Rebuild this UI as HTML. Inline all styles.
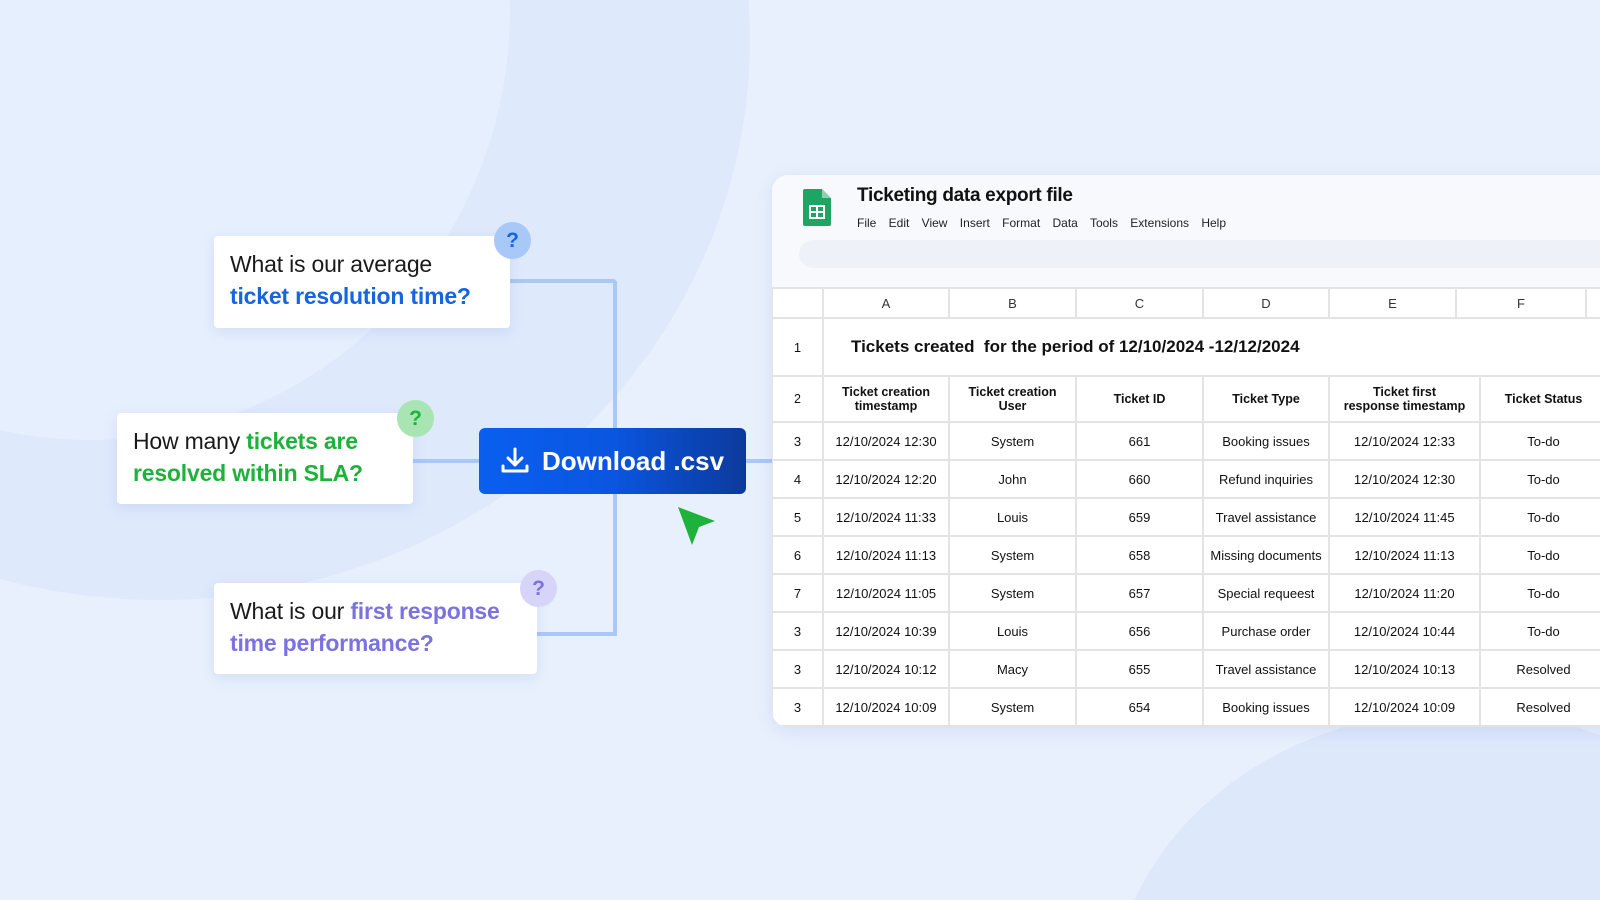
<!DOCTYPE html><html><head><style>
html,body{margin:0;padding:0;width:1600px;height:900px;overflow:hidden}
body{background:#e8f0fd;font-family:"Liberation Sans",sans-serif}
#wrap{position:relative;width:1600px;height:900px;overflow:hidden;background:#e8f0fd}
.abs{position:absolute}
.card{position:absolute;background:#fff;border-radius:4px;box-shadow:0 4px 14px rgba(90,130,200,.15);font-size:23px;line-height:32px;color:#1a1a1a;box-sizing:border-box;padding:12px 0 0 16px;letter-spacing:-0.2px}
.q{position:absolute;width:37px;height:37px;border-radius:50%;text-align:center;line-height:37px;font-size:21px;font-weight:bold}
.line{position:absolute;background:#a9c8f6}
table{border-collapse:collapse;font-size:13px;color:#111}
td{border:2px solid #e3e3e3;text-align:center;padding:0}
</style></head><body><div id="wrap">
<div class="abs" style="left:-430px;top:-520px;width:1180px;height:1120px;border-radius:50%;background:#dfe9fc"></div>
<div class="abs" style="left:-330px;top:-420px;width:840px;height:860px;border-radius:50%;background:#e6effd"></div>
<div class="abs" style="left:1110px;top:710px;width:700px;height:600px;border-radius:50%;background:#dde8fb"></div>

<div class="line" style="left:440px;top:279px;width:177px;height:4px;border-radius:0 10px 0 0"></div>
<div class="line" style="left:613px;top:281px;width:4px;height:355px"></div>
<div class="line" style="left:530px;top:632px;width:87px;height:4px"></div>
<div class="line" style="left:410px;top:459px;width:370px;height:4px"></div>

<div class="card" style="left:214px;top:236px;width:296px;height:92px;padding-left:16px">What is our average<br><span style="color:#1565e0;font-weight:bold">ticket resolution time?</span></div>
<div class="q" style="left:494px;top:222px;background:#a8c8f7;color:#1565e0">?</div>
<div class="card" style="left:117px;top:413px;width:296px;height:91px">How many <b style="color:#1eb23a">tickets are<br>resolved within SLA?</b></div>
<div class="q" style="left:397px;top:400px;background:#a9e4b3;color:#1eb23a">?</div>
<div class="card" style="left:214px;top:583px;width:323px;height:91px">What is our <b style="color:#7b72e0">first response<br>time performance?</b></div>
<div class="q" style="left:520px;top:570px;background:#d6d4f8;color:#7b72e0">?</div>

<div class="abs" style="left:479px;top:428px;width:267px;height:66px;border-radius:6px;background:linear-gradient(90deg,#0a5ff0 0%,#0a56e0 50%,#0c3a9c 100%);color:#fff;font-size:26px;font-weight:bold;line-height:66px">
<svg class="abs" style="left:21px;top:18px" width="30" height="30" viewBox="0 0 30 30" fill="none" stroke="#fff" stroke-width="3" stroke-linecap="round" stroke-linejoin="round"><path d="M15 3v16M8 12l7 7 7-7M3 20v5h24v-5"/></svg>
<span class="abs" style="left:63px">Download .csv</span></div>
<svg class="abs" style="left:675px;top:504px" width="45" height="45" viewBox="0 0 45 45"><path d="M3 3L40 17L24 23L17 41Z" fill="#1eb23a"/></svg>

<div class="abs" style="left:772px;top:175px;width:860px;height:552px;background:#fff;border-radius:16px 0 0 16px;overflow:hidden;box-shadow:0 4px 16px rgba(90,130,200,.15)">
 <div class="abs" style="left:0;top:0;width:860px;height:113px;background:#f8f9fd"></div>
 <svg class="abs" style="left:31px;top:14px" width="28" height="37" viewBox="0 0 28 37"><path d="M0 2Q0 0 2 0H19L28 9V35Q28 37 26 37H2Q0 37 0 35Z" fill="#1fa463"/><path d="M19 0V9H28Z" fill="#8ed1b1"/><rect x="7" y="17" width="14" height="12" fill="none" stroke="#fff" stroke-width="2"/><path d="M7 23H21M14 17V29" stroke="#fff" stroke-width="2"/></svg>
 <div class="abs" style="left:85px;top:10px;font-size:19px;color:#111;font-weight:bold;letter-spacing:-0.3px">Ticketing data export file</div>
 <div class="abs" style="left:85px;top:41px;font-size:12px;color:#222;word-spacing:9px">File Edit View Insert Format Data Tools Extensions Help</div>
 <div class="abs" style="left:27px;top:65px;width:860px;height:28px;border-radius:14px;background:#eef1f7"></div>
 <table class="abs" style="left:-1px;top:112px;width:880px">
  <tr style="height:30px;color:#333"><td style="width:49px"></td><td style="width:124px">A</td><td style="width:125px">B</td><td style="width:125px">C</td><td style="width:124px">D</td><td style="width:125px">E</td><td style="width:128px">F</td><td></td></tr>
 </table>
 <table class="abs" style="left:-1px;top:142px;width:880px">
  <tr style="height:58px"><td style="width:49px">1</td><td colspan="7" style="text-align:left;padding-left:27px;font-size:17px;font-weight:bold">Tickets created &nbsp;for the period of 12/10/2024 -12/12/2024</td></tr>
  <tr style="height:46px;font-weight:bold;font-size:12.5px"><td style="width:49px;font-weight:normal">2</td><td style="width:124px">Ticket creation<br>timestamp</td><td style="width:125px">Ticket creation<br>User</td><td style="width:125px">Ticket ID</td><td style="width:124px">Ticket Type</td><td style="width:149px">Ticket first<br>response timestamp</td><td style="width:125px">Ticket Status</td><td></td></tr>
  <tr style="height:38px"><td>3</td><td>12/10/2024 12:30</td><td>System</td><td>661</td><td>Booking issues</td><td>12/10/2024 12:33</td><td>To-do</td><td></td></tr>
  <tr style="height:38px"><td>4</td><td>12/10/2024 12:20</td><td>John</td><td>660</td><td>Refund inquiries</td><td>12/10/2024 12:30</td><td>To-do</td><td></td></tr>
  <tr style="height:38px"><td>5</td><td>12/10/2024 11:33</td><td>Louis</td><td>659</td><td>Travel assistance</td><td>12/10/2024 11:45</td><td>To-do</td><td></td></tr>
  <tr style="height:38px"><td>6</td><td>12/10/2024 11:13</td><td>System</td><td>658</td><td>Missing documents</td><td>12/10/2024 11:13</td><td>To-do</td><td></td></tr>
  <tr style="height:38px"><td>7</td><td>12/10/2024 11:05</td><td>System</td><td>657</td><td>Special requeest</td><td>12/10/2024 11:20</td><td>To-do</td><td></td></tr>
  <tr style="height:38px"><td>3</td><td>12/10/2024 10:39</td><td>Louis</td><td>656</td><td>Purchase order</td><td>12/10/2024 10:44</td><td>To-do</td><td></td></tr>
  <tr style="height:38px"><td>3</td><td>12/10/2024 10:12</td><td>Macy</td><td>655</td><td>Travel assistance</td><td>12/10/2024 10:13</td><td>Resolved</td><td></td></tr>
  <tr style="height:38px"><td>3</td><td>12/10/2024 10:09</td><td>System</td><td>654</td><td>Booking issues</td><td>12/10/2024 10:09</td><td>Resolved</td><td></td></tr>
 </table>
</div>
</div></body></html>
